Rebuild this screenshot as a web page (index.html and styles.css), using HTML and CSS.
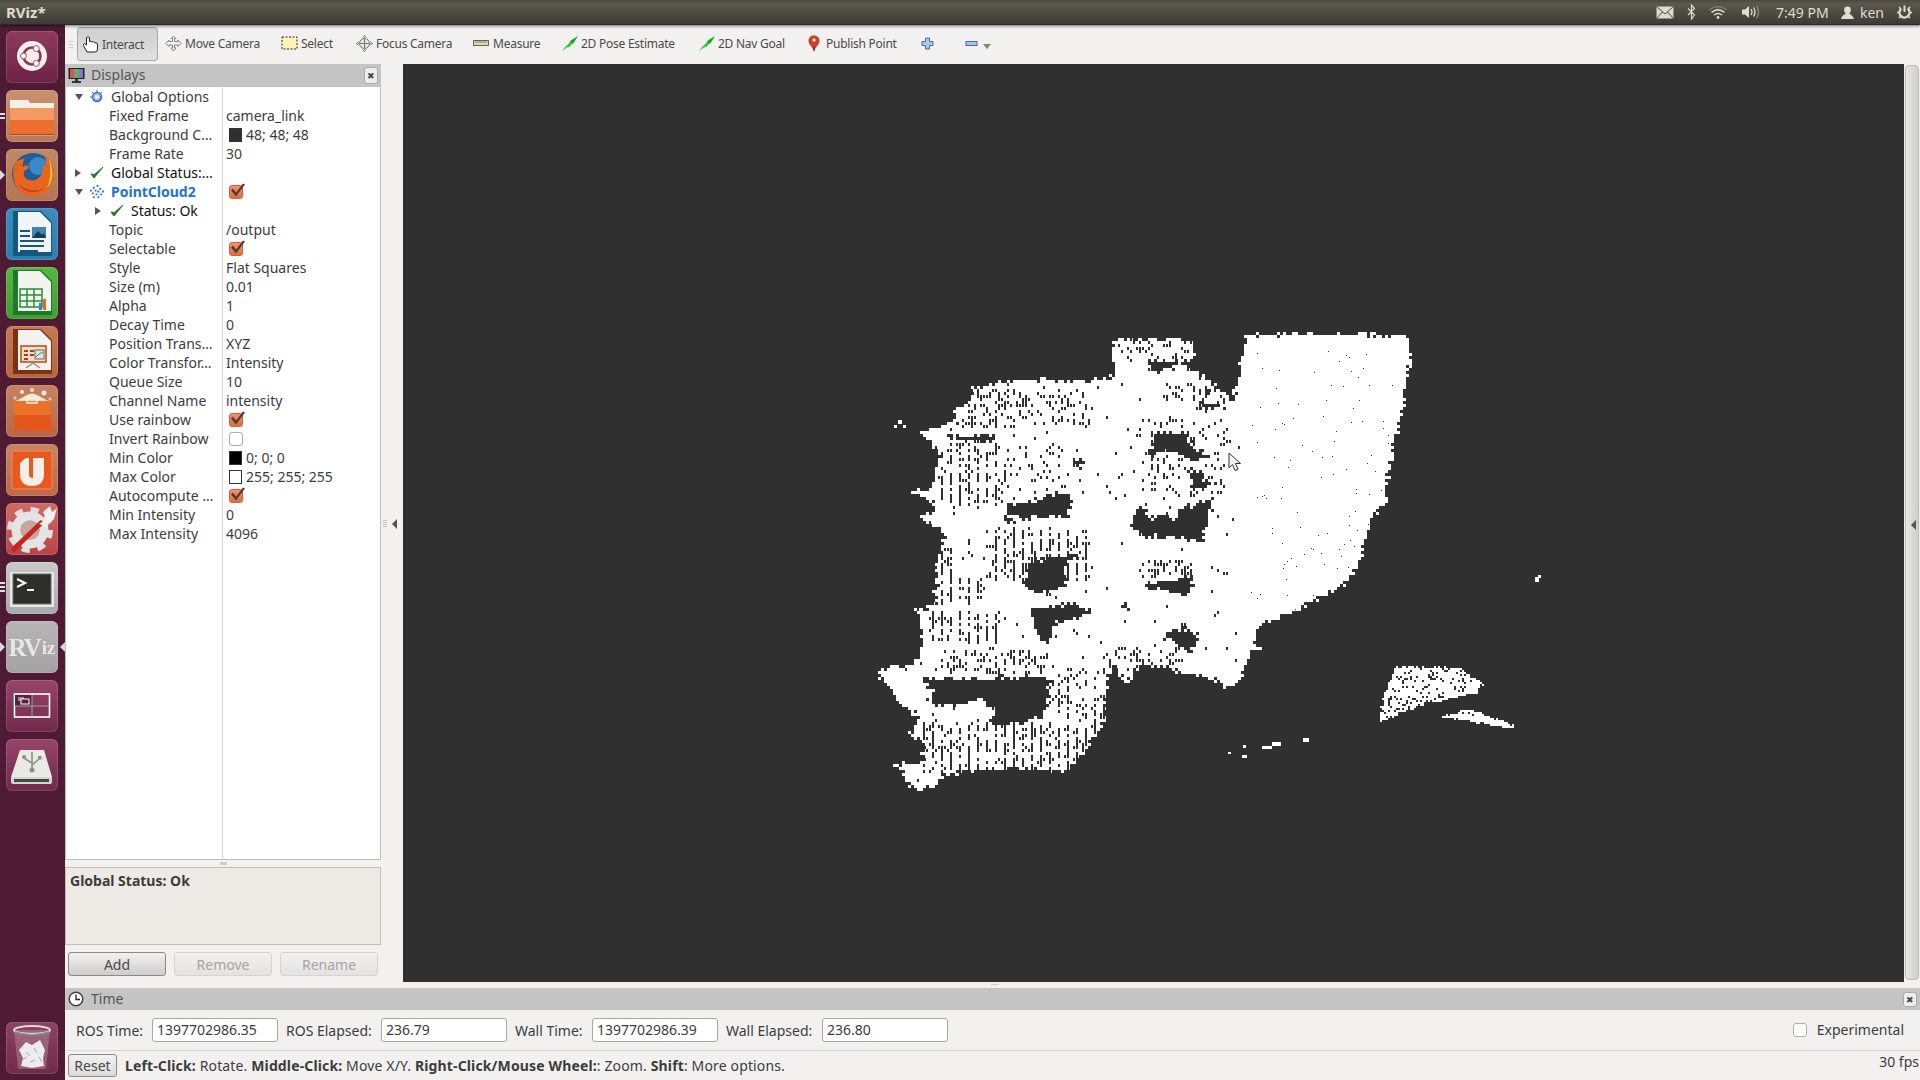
FILE: index.html
```html
<!DOCTYPE html>
<html lang="en">
<head>
<meta charset="utf-8">
<title>RViz*</title>
<link rel="stylesheet" href="styles.css">
</head>
<body>
<header class="panel">
  <div class="app-title">RViz*</div>
  <div class="tray">
    <svg class="ti ti-mail" viewBox="0 0 18 13"><rect x=".5" y=".5" width="17" height="12" fill="#dcd9d0"/><path d="M.5.5 9 8 17.500.5M.5 12.500 6.500 6M17.500 12.500 11.500 6" fill="none" stroke="#4a4942"/></svg>
    <svg class="ti ti-bt" viewBox="0 0 9 16"><path d="M1 4.500 7.500 11 4.500 15V1L7.500 4.500 1 11" fill="none" stroke="#dcd9d0" stroke-width="1.200"/></svg>
    <svg class="ti ti-wifi" viewBox="0 0 20 14"><path d="M1 5Q10-2 19 5" fill="none" stroke="#7a7870" stroke-width="1.400"/><path d="M3.500 7.500Q10 2 16.500 7.500M6 10Q10 7 14 10" fill="none" stroke="#e0ddd4" stroke-width="1.500"/><circle cx="10" cy="12.500" r="1.400" fill="#e0ddd4"/></svg>
    <svg class="ti ti-vol" viewBox="0 0 20 16"><path d="M1 5.500H4L8 2V14L4 10.500H1Z" fill="#e0ddd4"/><path d="M10 5Q12 8 10 11M12.500 3.500Q15.500 8 12.500 12.500" fill="none" stroke="#e0ddd4" stroke-width="1.300"/><path d="M15.500 1.500Q19.500 8 15.500 14.500" fill="none" stroke="#8a8880" stroke-width="1.300"/></svg>
    <span class="clock">7:49 PM</span>
    <svg class="ti ti-user" viewBox="0 0 13 13"><circle cx="6.500" cy="4" r="3.400" fill="#e0ddd4"/><path d="M0 13C1 8.500 5 9 5 6H8C8 9 12 8.500 13 13Z" fill="#e0ddd4"/></svg>
    <span class="who">ken</span>
    <svg class="ti ti-power" viewBox="0 0 17 17"><circle cx="8.500" cy="8.500" r="5" fill="none" stroke="#dcd9d0" stroke-width="2.400" stroke-dasharray="24 8" transform="rotate(-52 8.500 8.500)"/><path d="M8.500 1.500V8" stroke="#dcd9d0" stroke-width="2"/><path d="M1 8.500H3M14 8.500H16M3 3 4.500 4.500M14 3 12.500 4.500M3 14 4.500 12.500M14 14 12.500 12.500" stroke="#dcd9d0" stroke-width="1.600"/></svg>
  </div>
</header>

<div class="desk">
  <nav class="launcher">
    <div class="tile tile-ubuntu"><svg viewBox="0 0 52 52"><circle cx="26" cy="25" r="15" fill="#f4eeee"/><circle cx="26" cy="25" r="8.500" fill="none" stroke="#8a3a58" stroke-width="2.600"/><circle cx="17.500" cy="25" r="3" fill="#f4eeee" stroke="#8a3a58" stroke-width=".8"/><circle cx="30.300" cy="17.600" r="3" fill="#f4eeee" stroke="#8a3a58" stroke-width=".8"/><circle cx="30.300" cy="32.400" r="3" fill="#f4eeee" stroke="#8a3a58" stroke-width=".8"/></svg></div>

    <div class="tile tile-files"><svg viewBox="0 0 52 52"><path d="M4 10H22L24 13H48V46H4Z" fill="#f4f0e8"/><path d="M4 18H48V44H4Z" fill="#ec6f2f"/><path d="M4 18H48V30H4Z" fill="#f49a62"/><rect x="4" y="44" width="44" height="1.500" fill="#a8481a"/></svg><i class="pip pip-lines"></i></div>

    <div class="tile tile-firefox"><svg viewBox="0 0 52 52"><circle cx="27" cy="25" r="21" fill="#1e5e9a"/><circle cx="32" cy="17" r="9" fill="#3a8ac8"/><path d="M10 12C3 26 9 47 27 47C41 47 49 35 48 23C47 14 42 8 38 6C42 14 39 20 36 17C39 26 30 35 21 30C16 27 17 21 22 20C24 15 19 16 17 18C16 14 18 11 19 9C15 10 12 12 10 12Z" fill="#e8651f"/><path d="M43 10C48 20 48 32 41 39C45 29 45 20 43 10Z" fill="#f9c32f"/><path d="M12 34C17 44 30 46 39 39C30 43 19 42 12 34Z" fill="#c8401a"/></svg><i class="pip pip-tri"></i></div>

    <div class="tile tile-writer"><svg viewBox="0 0 52 52"><path d="M7 3H35L46 14V48H7Z" fill="#14577f"/><path d="M12 4H34L45 15V44H12Z" fill="#f2f4f5"/><path d="M14 22H24V24H14ZM14 27H24V29H14ZM14 32H38V34H14ZM14 37H38V39H14ZM14 42H32V44H14Z" fill="#14577f"/><rect x="26" y="19" width="14" height="11" fill="#3f86b8"/><path d="M26 30 32 23 36 27 38 25 40 30Z" fill="#1e3a50"/></svg></div>

    <div class="tile tile-calc"><svg viewBox="0 0 52 52"><path d="M7 3H35L46 14V48H7Z" fill="#1d7a2a"/><path d="M12 4H34L45 15V44H12Z" fill="#f2f4f0"/><path d="M14 22H36V40H14Z" fill="none" stroke="#2c8a38" stroke-width="1.500"/><path d="M14 28H36M14 34H36M21 22V40M28 22V40" stroke="#2c8a38" stroke-width="1.500"/><rect x="33" y="36" width="3" height="7" fill="#3a80c8"/><rect x="37" y="32" width="3" height="11" fill="#e06a20"/></svg></div>

    <div class="tile tile-impress"><svg viewBox="0 0 52 52"><path d="M7 3H35L46 14V48H7Z" fill="#7a3414"/><path d="M12 4H34L45 15V44H12Z" fill="#f4f2f0"/><rect x="15" y="20" width="25" height="16" fill="#f6ddc8" stroke="#b84a14" stroke-width="1.500"/><path d="M18 24H22V26H18ZM18 28H22V30H18ZM18 32H22V34H18ZM24 24H28V26H24ZM24 28H28V30H24Z" fill="#a8401a"/><rect x="29" y="24" width="9" height="9" fill="#dfe6df" stroke="#666"/><path d="M30 31 33 28 37 26" fill="none" stroke="#3a9a3a"/><path d="M20 42 27 37 34 42" fill="none" stroke="#888" stroke-width="1.200"/></svg></div>

    <div class="tile tile-soft"><svg viewBox="0 0 52 52"><circle cx="16" cy="7" r="2" fill="#dfe6ef"/><circle cx="26" cy="5" r="2" fill="#e8e0c0"/><circle cx="38" cy="8" r="2.500" fill="#dfe6ef"/><circle cx="44" cy="14" r="1.500" fill="#f2d0a0"/><circle cx="9" cy="13" r="1.800" fill="#b8c8e0"/><path d="M19 11Q26 6 33 11L44 17H8Z" fill="#f7e6cf"/><path d="M8 16H44L46 46 8 44Z" fill="#e4561a"/><path d="M8 16H44L45 30 8 30Z" fill="#ed7128"/><rect x="21" y="13" width="10" height="5" fill="none" stroke="#f4eee0" stroke-width="1.600"/></svg></div>

    <div class="tile tile-one"><svg viewBox="0 0 52 52"><rect x="6" y="7" width="40" height="38" rx="1" fill="#e9581d" stroke="#f28a58"/><path d="M14 19 20 14H23V31Q23 34 27 34V14H38V30Q38 42 26 42Q14 42 14 30Z" fill="#f6efe8"/></svg></div>

    <div class="tile tile-settings"><svg viewBox="0 0 52 52"><circle cx="24" cy="27" r="20" fill="none" stroke="#dedede" stroke-width="6" stroke-dasharray="8 7.700"/><circle cx="24" cy="27" r="14" fill="none" stroke="#e4e4e4" stroke-width="9"/><circle cx="24" cy="27" r="9.500" fill="#c9a5a0"/><path d="M8 46 35 20" stroke="#c8261d" stroke-width="5" stroke-linecap="round"/><path d="M33 21 40 16 37 9 44 3 46 9 51 5 48 16 40 24Z" fill="#f0f0f0"/></svg></div>

    <div class="tile tile-term"><svg viewBox="0 0 52 52"><rect x="4" y="10" width="44" height="35" fill="#e8e8e8"/><rect x="7" y="12" width="38" height="30" fill="#2e2e2c" stroke="#6a6a68"/><path d="M11 17 19 21 11 25" fill="none" stroke="#f4f4f4" stroke-width="2.200"/><rect x="21" y="27" width="7" height="2" fill="#f4f4f4"/></svg><i class="pip pip-dashes"></i></div>

    <div class="tile tile-rviz"><span class="rviz-word"><b>RV</b><small>iz</small></span><i class="pip pip-tri"></i><i class="pip pip-tri-r"></i></div>

    <div class="tile tile-work"><svg viewBox="0 0 52 52"><rect x="8.500" y="14" width="35" height="23" fill="none" stroke="#fff" stroke-width="1.600"/><rect x="9" y="15" width="17" height="11" fill="#5b1f3a"/><path d="M26 15V37M9 26H43" stroke="#9aa89a" stroke-width="1"/><rect x="12" y="17" width="6" height="4" fill="#9a8a92"/><rect x="15" y="19" width="8" height="5" fill="#5b1f3a" stroke="#fff"/></svg></div>

    <div class="tile tile-usb"><svg viewBox="0 0 52 52"><path d="M14 11H38L46 38H5Z" fill="#e9e9e6"/><path d="M5 38H46V43Q46 45 44 45H7Q5 45 5 43Z" fill="#d4d4d0"/><rect x="8" y="40" width="35" height="3" fill="#444"/><path d="M26 13V30M26 24 18 19M26 26 33 20" stroke="#8e8e8a" stroke-width="1.600" fill="none"/><circle cx="26" cy="31" r="2.500" fill="#8e8e8a"/><circle cx="18" cy="18" r="2" fill="#8e8e8a"/><rect x="32" y="17" width="3.500" height="3.500" fill="#8e8e8a"/></svg></div>

    <div class="tile tile-trash"><svg viewBox="0 0 52 52"><path d="M8 8H44L40 47H12Z" fill="#b08a9a" fill-opacity=".5"/><ellipse cx="26" cy="8" rx="18" ry="4" fill="none" stroke="#d9d9d9" stroke-width="2"/><path d="M9 10Q26 16 43 10" fill="none" stroke="#888" stroke-width="1.500"/><path d="M13 28 20 20 26 23 34 18 39 28 37 36 38 44 26 46 15 44 17 36Z" fill="#ececec"/><path d="M20 30 24 34M28 26 31 31M24 40 29 38M16 38 21 35M33 35 36 40" stroke="#a9a9a9" fill="none"/></svg></div>
  </nav>

  <main class="rviz">
    <div class="toolbar">
      <div class="grip"><i></i></div>
      <div class="tool tool-on">
        <svg class="ico" viewBox="0 0 17 17"><path d="M5 16H13Q15.500 16 15.500 13V8Q15 6 13 7 12 5 10 6 9 4.500 7.500 5.500V1.500Q6 0 4.500 1.500V9L2.500 7.500Q1 8 1.500 9.500Z" fill="#fff" stroke="#222" stroke-width="1"/></svg>
        <span>Interact</span>
      </div>
      <div class="tool">
        <svg class="ico" viewBox="0 0 17 17"><path d="M8.500 1 11 3.500H9.500V6.500H13V5L16 8.500 13 11.500V10H9.500V13H11L8.500 16 6 13H7.500V10H4V11.500L1 8.500 4 5V6.500H7.500V3.500H6Z" fill="#eef0f2" stroke="#777" stroke-width=".9"/></svg>
        <span>Move Camera</span>
      </div>
      <div class="tool">
        <svg class="ico" viewBox="0 0 17 17"><rect x="1" y="2" width="15" height="12" fill="#fbf3b8" stroke="#222" stroke-dasharray="2 1.500"/></svg>
        <span>Select</span>
      </div>
      <div class="tool">
        <svg class="ico" viewBox="0 0 17 17"><circle cx="8.500" cy="8.500" r="5" fill="#e4e6e8" stroke="#777"/><path d="M8.500 0V17M0 8.500H17" stroke="#777"/><path d="M6.500 2.500 8.500 .5 10.500 2.500M6.500 14.500 8.500 16.500 10.500 14.500M2.500 6.500 .5 8.500 2.500 10.500M14.500 6.500 16.500 8.500 14.500 10.500" fill="#ccc" stroke="#777" stroke-width=".8"/></svg>
        <span>Focus Camera</span>
      </div>
      <div class="tool">
        <svg class="ico" viewBox="0 0 17 17"><rect x=".5" y="5.500" width="15" height="5" fill="#e2d9a0" stroke="#666"/><path d="M3 6V8M5 6V8M7 6V8M9 6V8M11 6V8M13 6V8" stroke="#666" stroke-width=".7"/></svg>
        <span>Measure</span>
      </div>
      <div class="tool">
        <svg class="ico" viewBox="0 0 17 17"><path d="M1 16 17 1 8 12.500 5.500 10.500Z" fill="#14e034"/><path d="M1 16 10 6 12 8Z" fill="#20c838"/><path d="M17 1 9 6 12 9Z" fill="#14a82c"/></svg>
        <span>2D Pose Estimate</span>
      </div>
      <div class="tool">
        <svg class="ico" viewBox="0 0 17 17"><path d="M1 16 17 1 8 12.500 5.500 10.500Z" fill="#14e034"/><path d="M1 16 10 6 12 8Z" fill="#20c838"/><path d="M17 1 9 6 12 9Z" fill="#14a82c"/></svg>
        <span>2D Nav Goal</span>
      </div>
      <div class="tool">
        <svg class="ico ico-pin" viewBox="0 0 12 17"><path d="M6 0.500C2.500 0.500.5 3 .5 6C.5 9.500 4 11 6 16.500C8 11 11.500 9.500 11.500 6C11.500 3 9.500.5 6 .5Z" fill="#c4432b"/><path d="M6 11C5 13 5 15 6 16.500C7 15 7 13 6 11Z" fill="#5c3a20"/><circle cx="6" cy="5" r="1.700" fill="#f4dcc8"/></svg>
        <span>Publish Point</span>
      </div>
      <div class="tool tool-bare">
        <svg class="ico ico-small" viewBox="0 0 13 13"><path d="M4.500 1H8.500V4.500H12V8.500H8.500V12H4.500V8.500H1V4.500H4.500Z" fill="#aec6e6" stroke="#3f6fa8"/></svg>
      </div>
      <div class="tool tool-bare">
        <svg class="ico ico-small" viewBox="0 0 13 13"><rect x="1" y="4.500" width="11" height="4" fill="#aec6e6" stroke="#3f6fa8"/></svg>
        <i class="more"></i>
      </div>
    </div>

    <div class="middle">
      <section class="displays">
        <div class="title">
          <svg class="title-ico" viewBox="0 0 17 17"><rect x=".5" y="1" width="16" height="11" fill="#222"/><rect x="2" y="2" width="4" height="9" fill="#c85a5a"/><rect x="6" y="2" width="5" height="9" fill="#6aa86a"/><rect x="11" y="2" width="4" height="9" fill="#7a7ac8"/><path d="M7 12H10V14H13V16H4V14H7Z" fill="#333"/></svg>
          <span class="title-text">Displays</span>
          <span class="close">✖</span>
        </div>
        <div class="tree">
          <div class="row"><div class="name top"><i class="tw tw-d"></i><svg class="ni" viewBox="0 0 14 14"><circle cx="7" cy="7" r="4.500" fill="#a8c4ee" stroke="#3a6ec0" stroke-width="1.500"/><circle cx="7" cy="7" r="1.800" fill="#fff"/><path d="M7 0V14M0 7H14M2 2 12 12M12 2 2 12" stroke="#3a6ec0" stroke-dasharray="2 8"/></svg><span>Global Options</span></div><div class="val"></div></div>
          <div class="row"><div class="name">Fixed Frame</div><div class="val">camera_link</div></div>
          <div class="row"><div class="name">Background C…</div><div class="val"><i class="sw sw-bg"></i>48; 48; 48</div></div>
          <div class="row"><div class="name">Frame Rate</div><div class="val">30</div></div>
          <div class="row"><div class="name top status"><i class="tw tw-r"></i><svg class="ni" viewBox="0 0 14 14"><path d="M1 8 4 12 13 1 4.500 8.500Z" fill="#1f7a2c" stroke="#1f7a2c"/></svg><span>Global Status:…</span></div><div class="val"></div></div>
          <div class="row"><div class="name top pc"><i class="tw tw-d"></i><svg class="ni" viewBox="0 0 15 15"><path d="M7 0h2v2H7zM3 2h2v2H3zM10 3h2v2h-2zM0 5h2v2H0zM5 5h2v2H5zM8 6h2v2H8zM13 6h2v2h-2zM2 8h2v2H2zM11 9h2v2h-2zM6 9h2v2H6zM3 12h2v2H3zM8 12h2v2H8z" fill="#2272d8"/></svg><span>PointCloud2</span></div><div class="val"><i class="cb cb-on"></i></div></div>
          <div class="row"><div class="name sub status"><i class="tw tw-r"></i><svg class="ni" viewBox="0 0 14 14"><path d="M1 8 4 12 13 1 4.500 8.500Z" fill="#1f7a2c" stroke="#1f7a2c"/></svg><span>Status: Ok</span></div><div class="val"></div></div>
          <div class="row"><div class="name">Topic</div><div class="val">/output</div></div>
          <div class="row"><div class="name">Selectable</div><div class="val"><i class="cb cb-on"></i></div></div>
          <div class="row"><div class="name">Style</div><div class="val">Flat Squares</div></div>
          <div class="row"><div class="name">Size (m)</div><div class="val">0.01</div></div>
          <div class="row"><div class="name">Alpha</div><div class="val">1</div></div>
          <div class="row"><div class="name">Decay Time</div><div class="val">0</div></div>
          <div class="row"><div class="name">Position Trans…</div><div class="val">XYZ</div></div>
          <div class="row"><div class="name">Color Transfor…</div><div class="val">Intensity</div></div>
          <div class="row"><div class="name">Queue Size</div><div class="val">10</div></div>
          <div class="row"><div class="name">Channel Name</div><div class="val">intensity</div></div>
          <div class="row"><div class="name">Use rainbow</div><div class="val"><i class="cb cb-on"></i></div></div>
          <div class="row"><div class="name">Invert Rainbow</div><div class="val"><i class="cb"></i></div></div>
          <div class="row"><div class="name">Min Color</div><div class="val"><i class="sw sw-min"></i>0; 0; 0</div></div>
          <div class="row"><div class="name">Max Color</div><div class="val"><i class="sw sw-max"></i>255; 255; 255</div></div>
          <div class="row"><div class="name">Autocompute …</div><div class="val"><i class="cb cb-on"></i></div></div>
          <div class="row"><div class="name">Min Intensity</div><div class="val">0</div></div>
          <div class="row"><div class="name">Max Intensity</div><div class="val">4096</div></div>
        </div>
        <div class="hgrip"></div>
        <div class="help"><b>Global Status: Ok</b></div>
        <div class="actions">
          <button class="btn">Add</button>
          <button class="btn btn-off">Remove</button>
          <button class="btn btn-off">Rename</button>
        </div>
      </section>
      <div class="split"><i class="dots"></i><i class="arrow-l"></i></div>
      <section class="render">
        <canvas id="cloud" class="cloud" width="700" height="480"></canvas>
        <svg class="cursor" viewBox="0 0 13 20"><path d="M1 1V16L4.500 12.500 7 18.500 10 17.300 7.500 11.500H12.500Z" fill="#f4f4f4" stroke="#333" stroke-width="1"/></svg>
      </section>
      <div class="rail"><i class="arrow-l"></i></div>
    </div>

    <div class="vgrip"></div>

    <section class="time">
      <div class="title">
        <svg class="title-ico" viewBox="0 0 16 16"><circle cx="8" cy="8" r="6.800" fill="#fff" stroke="#444" stroke-width="1.500"/><path d="M8 3.500V8.500H12" fill="none" stroke="#222" stroke-width="1.300"/></svg>
        <span class="title-text">Time</span>
        <span class="close close-time">✖</span>
      </div>
      <div class="time-row">
        <label>ROS Time:</label><div class="field">1397702986.35</div>
        <label class="lg">ROS Elapsed:</label><div class="field">236.79</div>
        <label class="lg">Wall Time:</label><div class="field">1397702986.39</div>
        <label class="lg">Wall Elapsed:</label><div class="field">236.80</div>
        <div class="exp"><i class="cb"></i><span>Experimental</span></div>
      </div>
    </section>

    <footer class="status-bar">
      <button class="btn btn-reset">Reset</button>
      <p class="hint"><b>Left-Click:</b> Rotate. <b>Middle-Click:</b> Move X/Y. <b>Right-Click/Mouse Wheel:</b>: Zoom. <b>Shift</b>: More options.</p>
      <span class="fps">30 fps</span>
    </footer>
  </main>
</div>
<script src="cloud.js"></script>
</body>
</html>
```
FILE: styles.css
```css
* { box-sizing: border-box; }
html, body { margin: 0; height: 100%; overflow: hidden; }
body {
  width: 1920px; height: 1080px;
  display: flex; flex-direction: column;
  background: #f2f1f0; color: #3c3c3c;
  font: 14px/19px "Noto Sans", "Open Sans", sans-serif;
}
svg { display: block; }

/* Ubuntu top panel */
.panel {
  height: 25px; flex: none; display: flex; align-items: center; justify-content: space-between;
  background: linear-gradient(#4a483f, #5b594c 15%, #47453d 70%, #3c3b37);
  border-bottom: 1px solid #2a2926;
  position: relative; z-index: 2;
  box-shadow: 0 1px 3px rgba(0,0,0,.55);
}
.app-title { margin-left: 6px; font-weight: 700; font-size: 15px; color: #dfdbd2; }
.tray { position: relative; display: flex; align-items: center; height: 24px; color: #dfdbd2; }
.ti { flex: none; }
.ti-mail { width: 18px; height: 13px; margin-right: 13px; }
.ti-bt { width: 9px; height: 16px; margin-right: 12px; }
.ti-wifi { width: 20px; height: 14px; margin-right: 13px; }
.ti-vol { width: 20px; height: 16px; margin-right: 15px; }
.clock { width: 52px; margin-right: 13px; font-size: 14px; white-space: nowrap; }
.ti-user { width: 13px; height: 13px; margin-right: 6px; }
.who { width: 24px; margin-right: 12px; }
.ti-power { width: 17px; height: 17px; margin-right: 7px; }

.desk { flex: 1; display: flex; min-height: 0; }

/* Launcher */
.launcher {
  width: 65px; flex: none; background: #4f1b34;
  padding: 6px 0 6px 6px; display: flex; flex-direction: column; gap: 7px;
}
.tile {
  width: 52px; height: 52px; border-radius: 6px; position: relative; flex: none;
  box-shadow: inset 0 0 0 1px rgba(255,255,255,.13);
}
.tile svg { width: 52px; height: 52px; }
.tile-ubuntu { background: linear-gradient(#8d3b5c, #6d2344); }
.tile-files { background: linear-gradient(#c9906f, #b87a58); }
.tile-firefox { background: linear-gradient(#bf8a66, #b47553); }
.tile-writer { background: linear-gradient(#3b8dbf, #2a7fb0); }
.tile-calc { background: linear-gradient(#57b642, #3f9e30); }
.tile-impress { background: linear-gradient(#c47a55, #b8653f); }
.tile-soft { background: linear-gradient(#c68461, #b96543); }
.tile-one { background: linear-gradient(#c78563, #bd6a47); }
.tile-settings { background: linear-gradient(#cf6a63, #b94347); }
.tile-term { background: linear-gradient(#c8c8c8, #a9a9a9); }
.tile-rviz { background: linear-gradient(#b7b5b6, #a3a1a2); }
.tile-work { background: linear-gradient(#96456a, #702a4a); }
.tile-usb { background: linear-gradient(#96456a, #702a4a); }
.tile-trash { background: linear-gradient(#8d4364, #702a4a); margin-top: auto; }
.pip { position: absolute; display: block; }
.pip-tri { left: -6px; top: 21px; border: 5px solid transparent; border-left: 5px solid #d9d9d9; border-right: 0; }
.pip-tri-r { right: -7px; top: 21px; border: 5px solid transparent; border-right: 5px solid #d9d9d9; border-left: 0; }
.pip-lines { left: -6px; top: 23px; width: 5px; height: 6px; border-top: 2px solid #e0e0e0; border-bottom: 2px solid #e0e0e0; }
.pip-dashes { left: -6px; top: 20px; width: 5px; height: 10px; background: repeating-linear-gradient(#e0e0e0 0 2px, transparent 2px 4px); }
.rviz-word {
  position: absolute; inset: 0; display: flex; align-items: center; justify-content: center;
  font-family: "Liberation Serif", serif; color: #e6e6e6; filter: blur(.7px);
  line-height: 1;
}
.rviz-word b { font-size: 25px; font-weight: 700; letter-spacing: -2px; }
.rviz-word small { font-size: 19px; font-weight: 700; margin-left: 2px; }

/* Application */
.rviz { flex: 1; min-width: 0; display: flex; flex-direction: column; }
.toolbar {
  height: 39px; flex: none; display: grid; align-items: center;
  grid-template-columns: 12px 83px 116px 75px 117px 88px 137px 110px 113px 44px 50px;
}
.grip i { display: block; width: 4px; height: 8px; margin-left: 4px; background: repeating-linear-gradient(#cfcdca 0 1px, transparent 1px 3px); }
.tool { display: flex; align-items: center; gap: 3px; padding-left: 5px; height: 33px; white-space: nowrap; color: #4a4a4a; font-size: 12px; letter-spacing: -.25px; margin-top: -2px; }
.tool-on {
  width: 81px; height: 34px; margin-top: -1px; border: 1px solid #a8a8a8; border-radius: 3px;
  background: linear-gradient(#cfcfcf, #e0e0e0); padding-left: 4px;
}
.tool-bare { gap: 5px; }
.ico { width: 17px; height: 17px; flex: none; }
.ico-pin { width: 12px; margin-right: 3px; }
.ico-small { width: 13px; height: 13px; }
.more { display: block; margin-top: 5px; border: 4px solid transparent; border-top: 5px solid #808080; border-bottom: 0; }

.middle { flex: 1; min-height: 0; display: flex; }
.displays { width: 316px; flex: none; display: flex; flex-direction: column; }
.title {
  height: 23px; flex: none; display: flex; align-items: center; background: #c4c4c4; padding-left: 3px;
}
.title-ico { width: 17px; height: 17px; flex: none; margin-right: 6px; }
.title-text { font-size: 14px; color: #555; margin-top: -2px; }
.close {
  margin-left: auto; margin-right: 3px; width: 14px; height: 17px; border: 1px solid #aaa; border-radius: 3px; background: #eee;
  font-size: 9px; line-height: 15px; text-align: center; color: #444;
}
.tree {
  flex: 1; min-height: 0; background: #fff linear-gradient(#d4d4d4, #d4d4d4) 156px 0 / 1px 100% no-repeat;
  border: 1px solid #c2bfba; border-top: 0;
}
.row { height: 19px; display: grid; grid-template-columns: 156px 1fr; white-space: nowrap; }
.name { padding-left: 43px; font-size: 14px; overflow: hidden; }
.name.top, .name.sub { display: flex; align-items: center; padding-left: 9px; }
.name.sub { padding-left: 29px; }
.name.status { color: #111; }
.name.pc { color: #2272d0; font-weight: 700; }
.tw { display: block; flex: none; }
.tw-d { border: 4px solid transparent; border-top: 6px solid #555; border-bottom: 0; width: 8px; height: 6px; margin-right: 7px; }
.tw-r { border: 4px solid transparent; border-left: 6px solid #555; border-right: 0; width: 6px; height: 8px; margin-right: 9px; }
.ni { width: 14px; height: 14px; flex: none; margin-right: 7px; }
.val { padding-left: 4px; font-size: 14px; display: flex; align-items: center; }
.sw { width: 13px; height: 14px; display: block; margin: 0 4px 0 3px; border: 1px solid #333; }
.sw-bg { background: #303030; }
.sw-min { background: #000; }
.sw-max { background: #fff; }
.cb { display: block; width: 14px; height: 14px; margin-left: 3px; border-radius: 3px; border: 1px solid #b0aeaa; background: #fff; position: relative; }
.cb-on { background: linear-gradient(#ee9470, #de6e44); border-color: #c96540; box-shadow: 0 0 1px rgba(0,0,0,.3); }
.cb-on::after {
  content: ""; position: absolute; left: 0; top: -3px; width: 16px; height: 15px; background: #5a3b30;
  clip-path: polygon(1px 8px, 3px 6px, 6px 10px, 13px 1px, 15px 2px, 6px 14px);
}
.hgrip { height: 7px; flex: none; background: linear-gradient(#cfcdca, #cfcdca) 155px 2px / 7px 3px no-repeat; }
.help { height: 78px; flex: none; padding: 3px 4px; background: #edeae5; border: 1px solid #c2bfba; font-size: 14px; }
.actions { height: 37px; flex: none; display: grid; grid-template-columns: 98px 98px 98px; gap: 8px; padding: 7px 3px 6px; }
.btn {
  font: inherit; font-size: 14px; color: #4a4a4a; padding: 0; height: 24px;
  border: 1px solid #8c8a86; border-radius: 3px; background: linear-gradient(#f2f1f0, #cfcdcb);
}
.btn-off { color: #a4a4a4; border-color: #d6d4d1; background: linear-gradient(#f2f1f0, #e4e3e1); }

.split { width: 22px; flex: none; position: relative; }
.dots { position: absolute; left: 2px; top: 456px; width: 4px; height: 7px; background: repeating-linear-gradient(#c8c6c3 0 1px, transparent 1px 2px); }
.arrow-l { position: absolute; left: 11px; top: 455px; border: 5px solid transparent; border-right: 5px solid #555; border-left: 0; }
.render { width: 1501px; flex: none; background: #303030; position: relative; overflow: hidden; }
.cloud { position: absolute; left: 457px; top: 256px; }
.cursor { position: absolute; left: 825px; top: 388px; width: 13px; height: 20px; }
.rail {
  width: 14px; margin: 1px 1px 2px 1px; flex: none; position: relative;
  border: 1px solid #bdbbb8; border-radius: 4px; background: linear-gradient(90deg, #e6e6e6, #cfcfcf);
}
.rail .arrow-l { left: 5px; top: 454px; }
.vgrip { height: 6px; flex: none; background: linear-gradient(#d0cecb, #d0cecb) 926px 2px / 8px 1px no-repeat; }

.time { flex: none; }
.time .title { height: 22px; }
.time .title-ico { width: 16px; height: 16px; margin-right: 7px; }
.time .title-text { margin-top: -1px; }
.close-time { height: 15px; line-height: 13px; }
.time-row {
  height: 40px; display: grid; align-items: center; padding-left: 11px;
  grid-template-columns: 76px 126px 103px 126px 85px 126px 104px 126px 1fr;
}
.time-row label { white-space: nowrap; font-size: 14px; }
.time-row .lg { padding-left: 8px; }
.field { height: 24px; line-height: 22px; border: 1px solid #aaa8a4; border-radius: 3px; background: #fff; padding-left: 4px; font-size: 14px; }
.exp { display: flex; justify-content: flex-end; align-items: center; gap: 10px; padding-right: 16px; font-size: 14px; margin-top: -1px; }
.exp .cb { margin: 0; }

.status-bar {
  height: 30px; flex: none; display: flex; align-items: center; padding-left: 3px;
  border-top: 1px solid #d9d7d4; position: relative;
}
.btn-reset { width: 49px; height: 23px; background: linear-gradient(#f2f1f0, #dddbd9); }
.hint { margin: 0 0 0 8px; font-size: 14px; letter-spacing: .14px; white-space: nowrap; }
.fps { margin-left: auto; margin-top: -8px; padding-right: 1px; font-size: 14px; }
```
FILE: cloud.js
```js
(function () {
  var cv = document.getElementById('cloud');
  var ctx = cv.getContext('2d');
  var OX = 860, OY = 320;
  var seed = 12345;
  function rnd() { seed = (seed * 1664525 + 1013904223) >>> 0; return seed / 4294967296; }
  function inPoly(p, x, y) {
    var c = false;
    for (var i = 0, j = p.length - 1; i < p.length; j = i++) {
      var a = p[i], b = p[j];
      if ((a[1] > y) !== (b[1] > y) && x < (b[0] - a[0]) * (y - a[1]) / (b[1] - a[1]) + a[0]) c = !c;
    }
    return c;
  }
  // Outline and holes in crop units: x = 859.5 + zx / 2.785, y = 320 + zy / 3
  var body = [[1075,45],[1300,42],[1530,45],[1535,100],[1510,280],[1490,350],[1470,480],[1470,545],[1430,590],[1410,660],[1390,730],[1340,800],[1200,880],[1110,920],[1100,960],[1115,995],[1085,1000],[1065,1060],[1050,1095],[1020,1100],[990,1075],[900,1060],[850,1040],[780,1040],[740,1090],[720,1040],[695,1045],[685,1100],[680,1210],[640,1270],[600,1330],[570,1355],[400,1345],[300,1350],[220,1370],[215,1395],[160,1410],[130,1385],[125,1350],[80,1340],[180,1325],[175,1260],[140,1250],[165,1190],[110,1150],[60,1070],[60,1050],[150,1030],[175,990],[170,900],[155,870],[210,860],[210,740],[240,640],[210,620],[165,595],[215,570],[200,545],[140,515],[200,500],[220,400],[170,335],[270,310],[270,265],[310,240],[320,200],[450,180],[640,185],[715,170],[705,90],[710,55],[930,60],[940,115],[900,130],[930,150],[1000,210],[1040,240],[1060,150]];
  var holes = [
    [[795,125],[945,118],[890,135],[830,160]],
    [[805,410],[820,340],[900,340],[930,380],[975,410],[930,420],[880,395],[830,400]],
    [[915,450],[950,450],[955,480],[995,490],[950,505],[930,515]],
    [[780,560],[800,565],[795,600],[850,580],[880,600],[890,570],[985,535],[965,620],[955,665],[880,650],[800,650],[755,625]],
    [[410,545],[470,550],[530,520],[590,525],[585,595],[520,590],[450,600],[410,570]],
    [[470,725],[560,710],[620,700],[565,730],[570,770],[585,800],[500,820],[460,800]],
    [[475,870],[600,850],[655,880],[580,900],[540,910],[535,965],[510,970],[490,920]],
    [[780,795],[930,770],[920,810],[905,830],[840,810]],
    [[830,945],[905,925],[940,940],[940,985],[915,995],[880,965]],
    [[165,1075],[290,1080],[420,1070],[530,1075],[515,1195],[430,1210],[360,1215],[380,1170],[340,1140],[300,1150],[190,1160],[205,1110]],
    [[945,245],[1035,262],[950,262]],
    [[950,210],[1005,212],[960,222]],
    [[220,345],[380,345],[370,365],[280,358]],
    [[590,425],[615,420],[635,440],[600,440]],
    [[400,590],[440,600],[420,615]],
    [[720,860],[755,845],[745,870]]
  ];
  // Thinly sampled parts of the surface: [x0, y0, x1, y1, chance of a gap, striped]
  var zones = [
    [280,210,640,320,.26,0],[220,360,400,560,.32,1],[400,380,620,520,.12,0],
    [360,630,640,780,.38,1],[190,670,260,860,.4,1],[280,770,350,850,.4,1],
    [200,880,400,970,.38,1],[230,990,530,1060,.34,0],[160,1210,680,1360,.36,1],
    [520,1040,680,1200,.24,1],[780,300,1030,520,.18,0],[780,720,930,770,.28,0],
    [680,980,900,1040,.18,0],[700,60,940,120,.2,0],[840,190,1030,260,.12,0]
  ];
  function gapChance(zx, zy, col) {
    for (var i = 0; i < zones.length; i++) {
      var z = zones[i];
      if (zx >= z[0] && zx < z[2] && zy >= z[1] && zy < z[3]) {
        return z[5] ? (col % 3 === 0 ? z[4] * 1.8 : z[4] * .35) : z[4];
      }
    }
    return zx > 1060 ? 0 : .02;
  }
  var S = 3;
  for (var r = 0; r * S < 480; r++) {
    for (var c = 0; c * S < 560; c++) {
      var px = c * S + 1.5, py = r * S + 1.5;
      var zx = (px + .5 + (rnd() - .5) * 5) * 2.785, zy = (py + (rnd() - .5) * 5) * 3;
      if (!inPoly(body, zx, zy)) continue;
      var hole = false;
      for (var h = 0; h < holes.length; h++) { if (inPoly(holes[h], zx, zy)) { hole = true; break; } }
      if (hole) continue;
      ctx.fillStyle = '#fff';
      ctx.fillRect(c * S, r * S, S, S);
      if (rnd() < gapChance(zx, zy, c)) {
        ctx.fillStyle = '#303030';
        ctx.fillRect(c * S, r * S, 2, S);
      }
    }
  }
  // fine specks on the flat right-hand wall
  ctx.fillStyle = '#303030';
  for (var n = 0; n < 110; n++) {
    var sx = 1250 + rnd() * 150 - OX, sy = 345 + rnd() * 270 - OY;
    ctx.fillRect(Math.round(sx), Math.round(sy), 1, 1);
  }
  // detached fragments, in page coordinates
  var blobs = [
    { pts: [[1396,665],[1457,667],[1484,683],[1475,692],[1420,704],[1377,722],[1384,692]], gap: .14 },
    { pts: [[1439,716],[1469,708],[1512,724],[1512,728],[1469,720]], gap: .02 }
  ];
  ctx.fillStyle = '#fff';
  blobs.forEach(function (b) {
    for (var y = 660; y < 730; y += 2) {
      for (var x = 1370; x < 1515; x += 2) {
        if (inPoly(b.pts, x + rnd() * 2 - 1, y + rnd() * 2 - 1) && rnd() > b.gap) ctx.fillRect(x - OX, y - OY, 2, 2);
      }
    }
  });
  [[1535,577,4,5],[1538,575,3,3],[1228,752,3,2],[1243,745,3,3],[1242,755,5,3],[1262,746,10,3],[1272,742,9,4],[1303,738,6,4]].forEach(function (d) {
    ctx.fillRect(d[0] - OX, d[1] - OY, d[2], d[3]);
  });
  [[898,420,4,4],[894,425,3,3],[903,425,3,3]].forEach(function (d) {
    ctx.fillRect(d[0] - OX, d[1] - OY, d[2], d[3]);
  });
})();
```
